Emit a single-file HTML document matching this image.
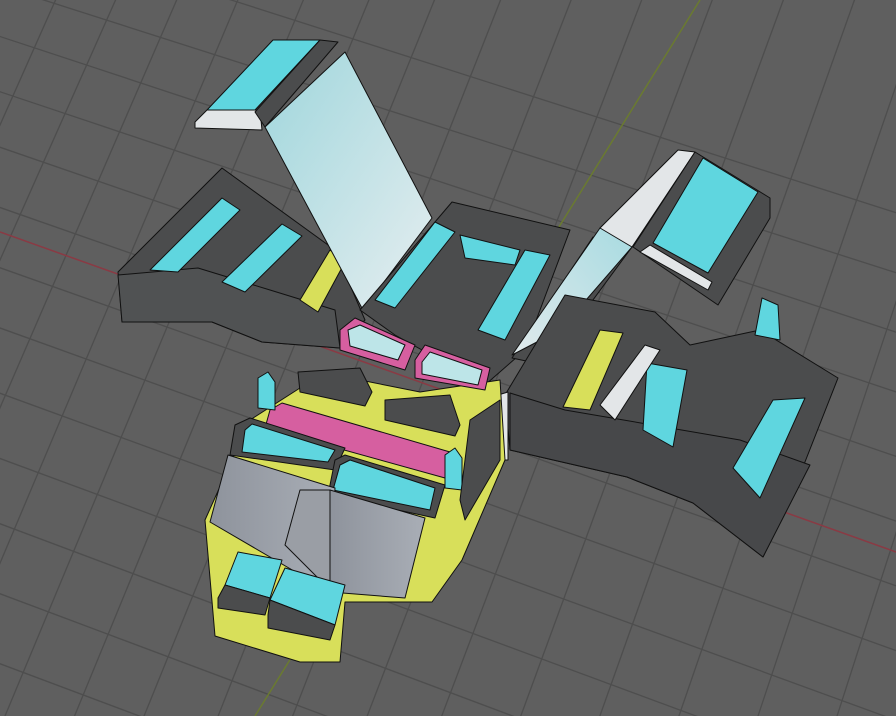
<!DOCTYPE html>
<html><head><meta charset="utf-8"><style>html,body{margin:0;padding:0;background:#5f5f5f;overflow:hidden;width:896px;height:716px}svg{display:block}</style></head><body>
<svg width="896" height="716" viewBox="0 0 896 716" xmlns="http://www.w3.org/2000/svg">
<defs>
<linearGradient id="pl" x1="0" y1="0" x2="1" y2="1"><stop offset="0" stop-color="#9fd6dc"/><stop offset="1" stop-color="#e6eef0"/></linearGradient>
<linearGradient id="pr" x1="1" y1="0" x2="0" y2="1"><stop offset="0" stop-color="#8fd4dc"/><stop offset="1" stop-color="#e0eaec"/></linearGradient>
<linearGradient id="gs" x1="0" y1="0" x2="1" y2="0"><stop offset="0" stop-color="#8e939c"/><stop offset="1" stop-color="#a9aeb6"/></linearGradient>
</defs>
<rect width="896" height="716" fill="#5f5f5f"/>
<g stroke="#4e4e4e" stroke-width="1.3">
<line x1="100" y1="-100" x2="-300" y2="800"/><line x1="160" y1="-100" x2="-240" y2="800"/><line x1="220" y1="-100" x2="-170" y2="800"/><line x1="280" y1="-100" x2="-100" y2="800"/><line x1="345" y1="-100" x2="-30" y2="800"/><line x1="410" y1="-100" x2="40" y2="800"/><line x1="475" y1="-100" x2="110" y2="800"/><line x1="540" y1="-100" x2="185" y2="800"/><line x1="610" y1="-100" x2="260" y2="800"/><line x1="680" y1="-100" x2="335" y2="800"/><line x1="750" y1="-100" x2="410" y2="800"/><line x1="820" y1="-100" x2="490" y2="800"/><line x1="890" y1="-100" x2="570" y2="800"/><line x1="960" y1="-100" x2="650" y2="800"/><line x1="1030" y1="-100" x2="730" y2="800"/><line x1="1100" y1="-100" x2="810" y2="800"/><line x1="1170" y1="-100" x2="890" y2="800"/>
<line x1="-50" y1="-30" x2="950" y2="290"/><line x1="-50" y1="20" x2="950" y2="350"/><line x1="-50" y1="75" x2="950" y2="410"/><line x1="-50" y1="130" x2="950" y2="475"/><line x1="-50" y1="190" x2="950" y2="540"/><line x1="-50" y1="250" x2="950" y2="605"/><line x1="-50" y1="310" x2="950" y2="670"/><line x1="-50" y1="375" x2="950" y2="740"/><line x1="-50" y1="440" x2="950" y2="810"/><line x1="-50" y1="505" x2="950" y2="880"/><line x1="-50" y1="575" x2="950" y2="950"/><line x1="-50" y1="645" x2="950" y2="1020"/><line x1="-50" y1="-90" x2="950" y2="230"/>
</g>
<line x1="0" y1="232" x2="896" y2="552" stroke="#8a3a44" stroke-width="1.5"/>
<line x1="700" y1="0" x2="255" y2="716" stroke="#6a7a30" stroke-width="1.5"/>
<g stroke="#111" stroke-width="1" stroke-linejoin="round">
<!-- left wing -->
<polygon points="118,272 222,168 335,250 365,320 340,348 262,342 212,322 122,322" fill="#4b4c4d"/>
<polygon points="118,275 198,268 270,290 335,310 340,348 262,342 212,322 122,322" fill="#505253"/>
<polygon points="150,270 222,198 240,210 178,272" fill="#5fd6df"/>
<polygon points="222,282 282,224 302,236 245,292" fill="#5fd6df"/>
<polygon points="300,300 330,250 345,262 318,312" fill="#d8df5a"/>
<!-- top-left panel -->
<polygon points="207,110 273,40 320,40 255,110" fill="#5fd6df"/>
<polygon points="195,122 207,110 260,110 262,130 195,128" fill="#e3e6e8"/>
<polygon points="255,112 320,40 338,42 265,127" fill="#4b4c4d"/>
<polygon points="265,127 345,52 432,218 363,310" fill="url(#pl)"/>
<!-- center -->
<polygon points="360,310 452,202 570,230 525,350 485,385 395,335" fill="#4b4c4d"/>
<polygon points="375,300 435,222 455,232 395,308" fill="#5fd6df"/>
<polygon points="460,235 520,250 515,265 465,258" fill="#5fd6df"/>
<polygon points="478,330 525,250 550,255 505,340" fill="#5fd6df"/>
<!-- right panel -->
<polygon points="512,358 593,237 632,247 545,365" fill="#4b4c4d"/>
<polygon points="512,355 600,228 675,158 632,247 560,330" fill="url(#pr)"/>
<polygon points="600,228 678,150 695,152 632,247" fill="#e3e6e8"/>
<polygon points="633,247 695,152 770,198 770,218 718,305" fill="#4b4c4d"/>
<polygon points="653,243 703,158 758,192 708,273" fill="#5fd6df"/>
<polygon points="640,252 708,290 712,282 650,245" fill="#e3e6e8"/>
<!-- right wing -->
<polygon points="505,395 565,295 655,312 690,345 760,330 838,378 790,500 763,557 693,503 627,477 510,450" fill="#4b4c4d"/>
<polygon points="510,393 565,410 740,440 810,465 763,557 693,503 627,477 510,450" fill="#47484a"/>
<polygon points="773,400 805,398 760,498 733,468" fill="#5fd6df"/>
<polygon points="600,330 623,333 590,410 563,407" fill="#d8df5a"/>
<polygon points="647,363 687,370 673,447 643,430" fill="#5fd6df"/>
<polygon points="600,405 645,345 660,350 615,420" fill="#e3e6e8"/>
<polygon points="755,335 762,298 778,305 780,340" fill="#5fd6df"/>
<polygon points="498,395 508,392 508,460 498,460" fill="#e3e6e8"/>
<!-- body -->
<polygon points="205,520 250,420 300,388 350,378 420,392 500,380 505,460 462,560 432,602 345,602 340,662 300,662 215,636" fill="#d8df5a"/>
<polygon points="340,330 355,318 415,345 405,370 340,350" fill="#d65fa0"/>
<polygon points="348,330 360,325 405,345 398,360 350,346" fill="#bde5e8"/>
<polygon points="415,360 425,345 490,368 485,390 415,378" fill="#d65fa0"/>
<polygon points="422,362 430,352 482,370 478,385 422,374" fill="#bde5e8"/>
<polygon points="298,372 360,368 372,392 365,406 300,392" fill="#4b4c4d"/>
<polygon points="385,400 450,395 460,425 455,436 385,420" fill="#4b4c4d"/>
<polygon points="270,410 282,403 450,452 445,478 265,428" fill="#d65fa0"/>
<polygon points="235,425 250,418 345,448 335,470 230,455" fill="#4b4c4d"/>
<polygon points="245,430 252,424 335,450 328,462 242,452" fill="#5fd6df"/>
<polygon points="335,460 345,455 445,485 435,518 328,495" fill="#4b4c4d"/>
<polygon points="340,465 350,460 435,488 430,510 333,490" fill="#5fd6df"/>
<polygon points="228,455 335,488 330,592 210,522" fill="url(#gs)"/>
<polygon points="330,490 425,518 405,598 330,592" fill="url(#gs)"/>
<polygon points="300,490 330,490 330,590 285,545" fill="#9a9ea5"/>
<polygon points="258,378 268,372 275,382 275,410 258,408" fill="#5fd6df"/>
<polygon points="445,455 455,448 462,458 462,490 445,488" fill="#5fd6df"/>
<polygon points="460,500 470,420 500,400 500,460 465,520" fill="#4b4c4d"/>
<polygon points="225,585 238,552 282,560 270,598" fill="#5fd6df"/>
<polygon points="218,598 225,585 270,598 265,615 218,608" fill="#4b4c4d"/>
<polygon points="270,600 285,568 345,585 335,625" fill="#5fd6df"/>
<polygon points="268,615 270,600 335,625 330,640 268,628" fill="#4b4c4d"/>
</g>
</svg>
</body></html>
